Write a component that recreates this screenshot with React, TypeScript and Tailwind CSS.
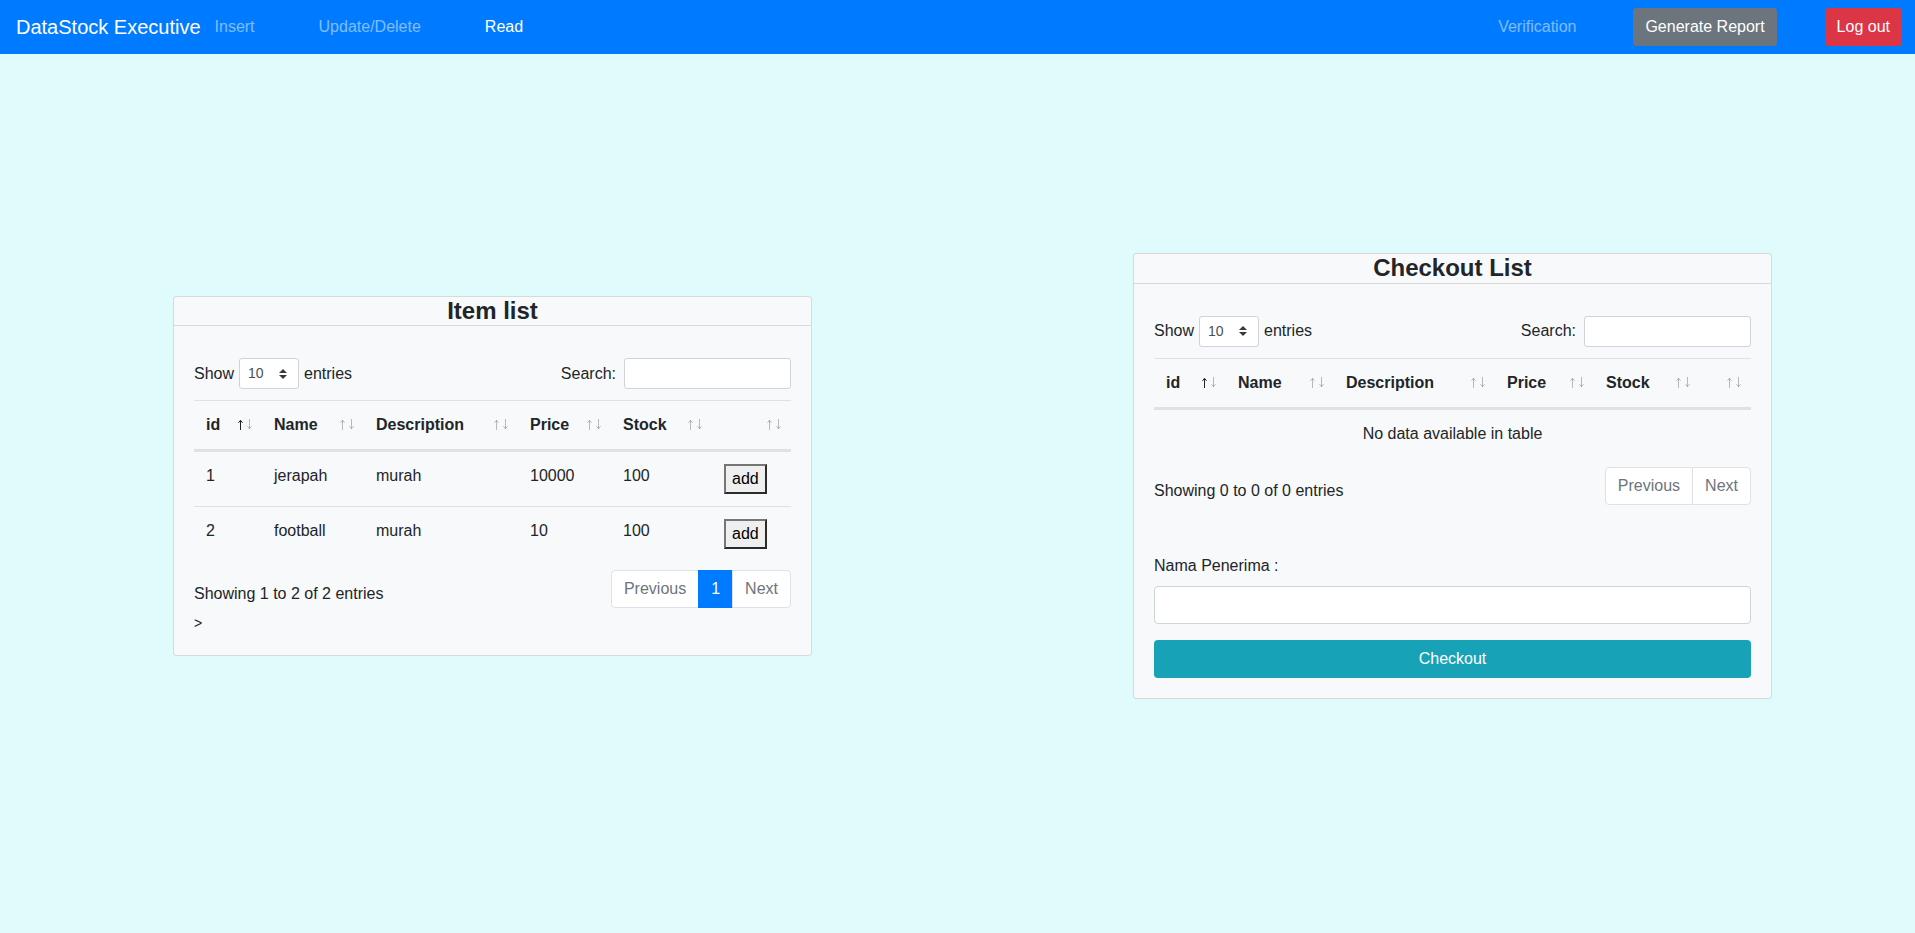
import React from 'react';

type Row = { id: number; name: string; description: string; price: number; stock: number };

const items: Row[] = [
  { id: 1, name: 'jerapah', description: 'murah', price: 10000, stock: 100 },
  { id: 2, name: 'football', description: 'murah', price: 10, stock: 100 },
];

const headers = ['id', 'Name', 'Description', 'Price', 'Stock', ''];

// DataTables style sort arrows
const SortIcon: React.FC<{ asc?: boolean }> = ({ asc }) => (
  <svg width="14" height="11" viewBox="0 0 14 11" className="absolute right-[10px] top-[18px]">
    <g fill="none" stroke="#212529" strokeWidth="1" opacity={asc ? 1 : 0.3}>
      <path d="M2.5 1.5V11M0.5 3.8L2.5 1.3L4.5 3.8" />
    </g>
    <g fill="none" stroke="#212529" strokeWidth="1" opacity="0.3">
      <path d="M11.5 0V9.5M9.5 7.2L11.5 9.7L13.5 7.2" />
    </g>
  </svg>
);

const LengthSelect: React.FC = () => (
  <div className="mx-[5px] flex h-[31px] w-[60px] items-center justify-between rounded-[3px] border border-[#ced4da] bg-white pl-2 pr-[11px] text-[14px] text-[#495057]">
    <span>10</span>
    <svg width="8" height="10" viewBox="0 0 4 5">
      <path fill="#343a40" d="M2 0L0 2h4zm0 5L0 3h4z" />
    </svg>
  </div>
);

const TableTop: React.FC = () => (
  <div className="mb-2 flex items-center justify-between">
    <div className="flex items-center">
      <span>Show</span>
      <LengthSelect />
      <span>entries</span>
    </div>
    <div className="flex items-center">
      <span>Search:</span>
      <div className="ml-2 h-[31px] w-[167px] rounded-[3px] border border-[#ced4da] bg-white" />
    </div>
  </div>
);

const Pagination: React.FC<{ pages: number[] }> = ({ pages }) => (
  <ul className="my-[2px] flex">
    <li className="flex h-[38px] items-center rounded-l-[4px] border border-[#dee2e6] bg-white px-3 text-[#6c757d]">
      Previous
    </li>
    {pages.map((p) => (
      <li
        key={p}
        className="-ml-px flex h-[38px] items-center border border-[#007bff] bg-[#007bff] px-3 text-white"
      >
        {p}
      </li>
    ))}
    <li className="-ml-px flex h-[38px] items-center rounded-r-[4px] border border-[#dee2e6] bg-white px-3 text-[#6c757d]">
      Next
    </li>
  </ul>
);

const DataTable: React.FC<{ widths: string[]; rows: Row[]; info: string; pages: number[] }> = ({
  widths,
  rows,
  info,
  pages,
}) => (
  <div>
    <TableTop />
    <table className="mt-[11px] w-full table-fixed border-collapse">
      <colgroup>
        {widths.map((w, i) => (
          <col key={i} className={w} />
        ))}
      </colgroup>
      <thead>
        <tr>
          {headers.map((h, i) => (
            <th
              key={i}
              className="relative border-t border-b-[3px] border-[#dee2e6] px-3 py-3 text-left align-bottom font-bold leading-6"
            >
              {h}
              <SortIcon asc={i === 0} />
            </th>
          ))}
        </tr>
      </thead>
      <tbody>
        {rows.length === 0 ? (
          <tr>
            <td colSpan={6} className="px-3 py-3 text-center leading-6">
              No data available in table
            </td>
          </tr>
        ) : (
          rows.map((r, idx) => (
            <tr key={r.id}>
              {[r.id, r.name, r.description, r.price, r.stock].map((v, i) => (
                <td
                  key={i}
                  className={`px-3 py-3 align-top leading-6 ${idx > 0 ? 'border-t border-[#dee2e6]' : ''}`}
                >
                  {v}
                </td>
              ))}
              <td className={`px-3 py-3 align-top leading-6 ${idx > 0 ? 'border-t border-[#dee2e6]' : ''}`}>
                <button className="border-2 border-t-[#767676] border-l-[#767676] border-r-[#2b2b2b] border-b-[#2b2b2b] bg-[#efefef] px-[6px] py-px leading-6 text-black">
                  add
                </button>
              </td>
            </tr>
          ))
        )}
      </tbody>
    </table>
    <div className="mt-[7px] flex items-start justify-between">
      <div className="pt-[14px] leading-6">{info}</div>
      <Pagination pages={pages} />
    </div>
  </div>
);

const Card: React.FC<{ title: string; children: React.ReactNode }> = ({ title, children }) => (
  <div className="w-[639px] rounded-[4px] border border-black/[.125] bg-[#f8f9fa]">
    <div className="border-b border-black/[.125] text-center">
      <h4 className="text-[24px] font-bold leading-[1.2]">{title}</h4>
    </div>
    <div className="px-5 pb-5 pt-8">{children}</div>
  </div>
);

export default function App() {
  return (
    <div
      className="min-h-[933px] bg-[#e0fbfc] text-[16px] text-[#212529]"
      style={{ fontFamily: '"Liberation Sans", Arial, sans-serif' }}
    >
      <nav className="flex h-[54px] items-center bg-[#007bff] pl-4 pr-[13px]">
        <span className="mr-[6px] text-[20px] leading-[30px] text-white">DataStock Executive</span>
        <ul className="flex gap-12">
          <li className="px-2 text-white/50">Insert</li>
          <li className="px-2 text-white/50">Update/Delete</li>
          <li className="px-2 text-white">Read</li>
        </ul>
        <div className="ml-auto flex items-center">
          <span className="px-2 text-white/50">Verification</span>
          <button className="ml-[49px] h-[38px] rounded-[4px] bg-[#6c757d] px-3 text-white">
            Generate Report
          </button>
          <button className="ml-12 h-[38px] rounded-[4px] bg-[#dc3545] px-3 text-white">Log out</button>
        </div>
      </nav>

      <main className="flex h-[844px] items-center gap-[321px] pl-[173px]">
        <Card title="Item list">
          <DataTable
            widths={['w-[68px]', 'w-[102px]', 'w-[154px]', 'w-[93px]', 'w-[101px]', 'w-[79px]']}
            rows={items}
            info="Showing 1 to 2 of 2 entries"
            pages={[1]}
          />
          <div className="mt-px text-[14px] leading-6">&gt;</div>
        </Card>

        <Card title="Checkout List">
          <DataTable
            widths={['w-[72px]', 'w-[108px]', 'w-[161px]', 'w-[99px]', 'w-[106px]', 'w-[51px]']}
            rows={[]}
            info="Showing 0 to 0 of 0 entries"
            pages={[]}
          />
          <label className="mt-[47px] mb-2 block leading-6">Nama Penerima :</label>
          <div className="h-[38px] w-full rounded-[4px] border border-[#ced4da] bg-white" />
          <button className="mt-4 h-[38px] w-full rounded-[4px] bg-[#17a2b8] text-white">Checkout</button>
        </Card>
      </main>
    </div>
  );
}
